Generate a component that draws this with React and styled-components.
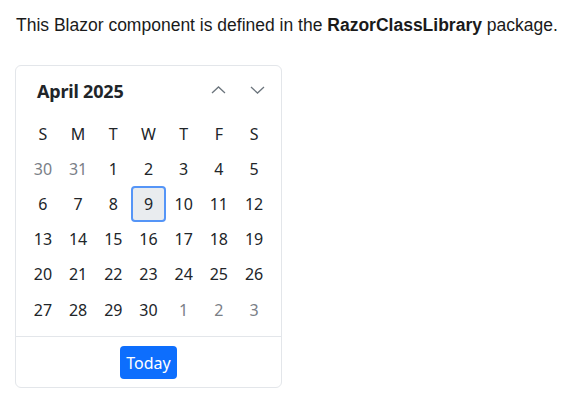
import React from 'react';
import styled, { createGlobalStyle } from 'styled-components';

const GlobalStyle = createGlobalStyle`
	body {
		margin: 0;
		background: #ffffff;
	}
`;

const Page = styled.div`
	padding: 15px 15px;
`;

const Intro = styled.p`
	margin: 0 0 30px 1px;
	font-family: 'Liberation Sans', Arial, sans-serif;
	font-size: 17.5px;
	line-height: 20px;
	color: #1a1a1a;
	b {
		font-weight: 700;
	}
`;

const Card = styled.div`
	width: 265px;
	border: solid 1px #e3e6ea;
	border-radius: 6px;
	font-family: 'Noto Sans', sans-serif;
	color: #212529;
	background: #ffffff;
`;

const Header = styled.div`
	display: flex;
	align-items: center;
	justify-content: space-between;
	height: 50px;
	padding: 0 8px 0 21px;
`;

const Title = styled.h2`
	margin: 0;
	font-size: 18px;
	font-weight: 700;
	letter-spacing: -0.2px;
`;

const NavHolder = styled.div`
	display: flex;
	gap: 7px;
	margin-top: -3px;
`;

const NavButton = styled.button`
	width: 32px;
	height: 28px;
	border: none;
	background: none;
	padding: 0;
	display: flex;
	align-items: center;
	justify-content: center;
	cursor: pointer;
`;

const Grid = styled.div`
	display: grid;
	grid-template-columns: repeat(7, 35.2px);
	grid-auto-rows: 35.2px;
	justify-content: center;
	padding: 0 0 9px;
`;

const WeekDay = styled.div`
	display: flex;
	align-items: center;
	justify-content: center;
	font-size: 16px;
	color: #212529;
`;

const Day = styled.div`
	display: flex;
	align-items: center;
	justify-content: center;
	font-size: 16px;
	color: ${(p) => (p.muted ? '#7a8087' : '#212529')};
	border-radius: 4px;
	border: solid 2px ${(p) => (p.selected ? '#5595f7' : 'transparent')};
	background: ${(p) => (p.selected ? '#e9ecef' : 'transparent')};
`;

const Footer = styled.div`
	border-top: solid 1px #e3e6ea;
	display: flex;
	justify-content: center;
	padding: 9px 0 8px;
`;

const TodayButton = styled.button`
	height: 33px;
	padding: 0 6.5px;
	border: none;
	border-radius: 4px;
	background: #0d6efd;
	color: #ffffff;
	font-family: 'Noto Sans', sans-serif;
	font-size: 16px;
	cursor: pointer;
`;

const Chevron = ({ up }) => (
	<svg width="15" height="8" viewBox="0 0 15 8">
		<polyline
			points={up ? '1,7 7.5,1 14,7' : '1,1 7.5,7 14,1'}
			fill="none"
			stroke="#6c757d"
			strokeWidth="1.3"
		/>
	</svg>
);

const weekDays = ['S', 'M', 'T', 'W', 'T', 'F', 'S'];

const days = [
	[30, true], [31, true],
	...Array.from({ length: 30 }, (_, i) => [i + 1, false]),
	[1, true], [2, true], [3, true],
];

const App = () => {
	return (
		<>
			<GlobalStyle />
			<Page>
				<Intro>
					This Blazor component is defined in the <b>RazorClassLibrary</b> package.
				</Intro>
				<Card>
					<Header>
						<Title>April 2025</Title>
						<NavHolder>
							<NavButton>
								<Chevron up />
							</NavButton>
							<NavButton>
								<Chevron />
							</NavButton>
						</NavHolder>
					</Header>
					<Grid>
						{weekDays.map((d, i) => (
							<WeekDay key={i}>{d}</WeekDay>
						))}
						{days.map(([n, muted], i) => (
							<Day key={i} muted={muted} selected={!muted && n === 9}>
								{n}
							</Day>
						))}
					</Grid>
					<Footer>
						<TodayButton>Today</TodayButton>
					</Footer>
				</Card>
			</Page>
		</>
	);
};

export default App;
